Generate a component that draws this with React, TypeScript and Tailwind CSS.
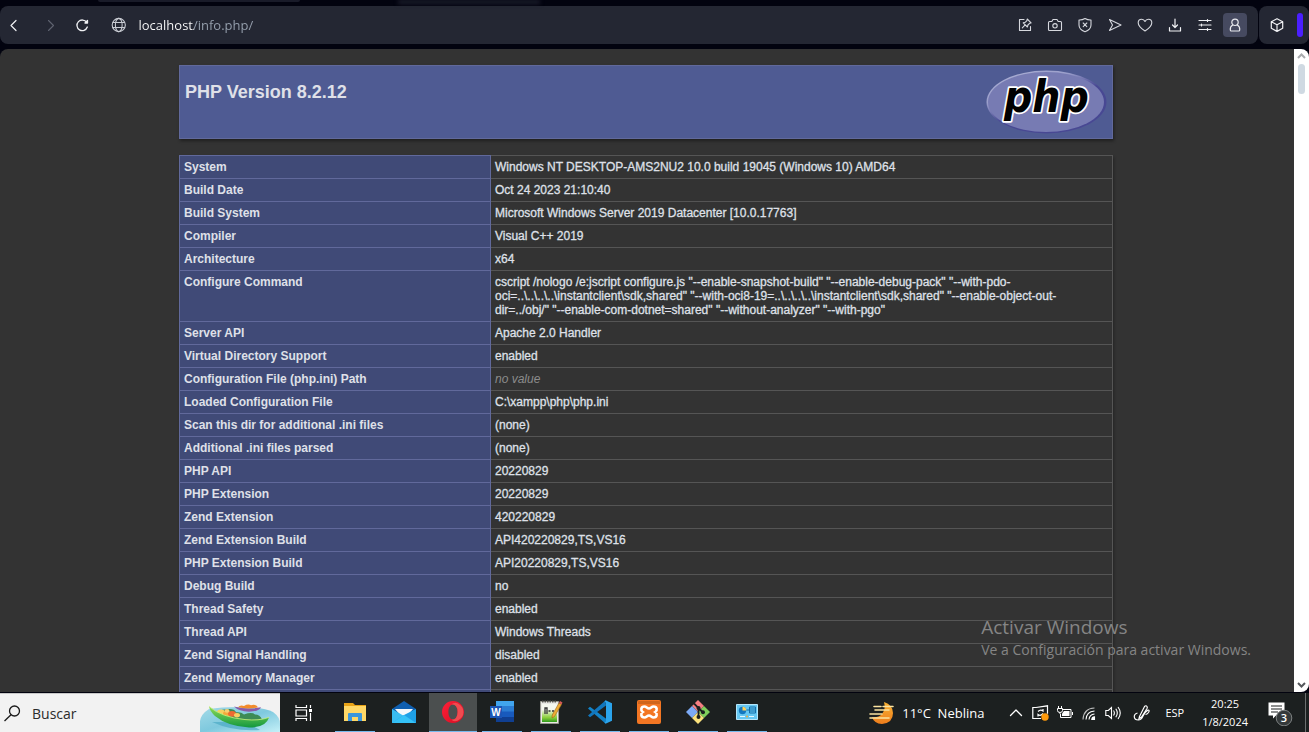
import type { ReactNode } from 'react';

const rows: [string, string | null][] = [
  ['System', 'Windows NT DESKTOP-AMS2NU2 10.0 build 19045 (Windows 10) AMD64'],
  ['Build Date', 'Oct 24 2023 21:10:40'],
  ['Build System', 'Microsoft Windows Server 2019 Datacenter [10.0.17763]'],
  ['Compiler', 'Visual C++ 2019'],
  ['Architecture', 'x64'],
  [
    'Configure Command',
    'cscript /nologo /e:jscript configure.js "--enable-snapshot-build" "--enable-debug-pack" "--with-pdo-oci=..\\..\\..\\..\\instantclient\\sdk,shared" "--with-oci8-19=..\\..\\..\\..\\instantclient\\sdk,shared" "--enable-object-out-dir=../obj/" "--enable-com-dotnet=shared" "--without-analyzer" "--with-pgo"',
  ],
  ['Server API', 'Apache 2.0 Handler'],
  ['Virtual Directory Support', 'enabled'],
  ['Configuration File (php.ini) Path', null],
  ['Loaded Configuration File', 'C:\\xampp\\php\\php.ini'],
  ['Scan this dir for additional .ini files', '(none)'],
  ['Additional .ini files parsed', '(none)'],
  ['PHP API', '20220829'],
  ['PHP Extension', '20220829'],
  ['Zend Extension', '420220829'],
  ['Zend Extension Build', 'API420220829,TS,VS16'],
  ['PHP Extension Build', 'API20220829,TS,VS16'],
  ['Debug Build', 'no'],
  ['Thread Safety', 'enabled'],
  ['Thread API', 'Windows Threads'],
  ['Zend Signal Handling', 'disabled'],
  ['Zend Memory Manager', 'enabled'],
  ['', ''],
];

function Line({ children, size = 16, color = '#d6d8de', width = 1.1 }: { children: ReactNode; size?: number; color?: string; width?: number }) {
  return (
    <svg width={size} height={size} viewBox="0 0 16 16" fill="none" stroke={color} strokeWidth={width} strokeLinecap="round" strokeLinejoin="round" aria-hidden="true">
      {children}
    </svg>
  );
}

function ToolButton({ label, children, active = false }: { label: string; children: ReactNode; active?: boolean }) {
  return (
    <button
      type="button"
      aria-label={label}
      className={active ? 'flex size-6 items-center justify-center rounded bg-[#464a60]' : 'flex size-6 items-center justify-center rounded'}
    >
      {children}
    </button>
  );
}

function PhpLogo() {
  return (
    <svg width="121" height="66" viewBox="0 0 121 66" role="img" aria-label="PHP logo">
      <defs>
        <linearGradient id="rim" x1="0.1" y1="0" x2="0.8" y2="1">
          <stop offset="0" stopColor="#aeb2d5" />
          <stop offset="0.3" stopColor="#9a9ecb" />
          <stop offset="0.55" stopColor="#484893" />
          <stop offset="1" stopColor="#484893" />
        </linearGradient>
      </defs>
      <ellipse cx="60.500" cy="32" rx="60" ry="31.500" fill="url(#rim)" />
      <ellipse cx="60" cy="32" rx="58" ry="30" fill="#777bb3" />
      <text
        x="18"
        y="42"
        fontFamily="DejaVu Sans Condensed, DejaVu Sans, sans-serif"
        fontWeight="700"
        fontStyle="italic"
        fontSize="44"
        fill="#000"
        stroke="#fff"
        strokeWidth="3.500"
        strokeLinejoin="round"
        paintOrder="stroke"
      >
        php
      </text>
    </svg>
  );
}

function BrowserBar() {
  return (
    <>
      <div className="flex h-[6px] shrink-0 items-start bg-[#02030f] pl-[98px]">
        <div className="h-[2px] w-[202px] rounded-b bg-[#191b29]" />
        <div className="ml-[98px] h-[4px] w-[142px] bg-[#1c1e2c] blur-[2px]" />
      </div>
      <header className="flex h-[39px] shrink-0 gap-px pb-px">
        <div className="flex min-w-0 flex-1 items-center rounded-lg bg-[#242733] pr-[11px]">
          <nav className="flex items-center gap-[10px] pl-[2px]" aria-label="Navegación">
            <ToolButton label="Atrás">
              <Line color="#f0f1f4" width={1.2}><path d="M10 3.500 5 8.500l5 5" /></Line>
            </ToolButton>
            <ToolButton label="Adelante">
              <Line color="#5f6370" width={1.1}><path d="m8.500 3.500 5 5-5 5" /></Line>
            </ToolButton>
            <ToolButton label="Recargar">
              <Line color="#f0f1f4" width={1.3}>
                <path d="M12.700 5.400A5.300 5.300 0 1 0 13.300 10" />
                <path d="M13.500 3.500v2.500H11z" fill="#f0f1f4" />
              </Line>
            </ToolButton>
          </nav>
          <div className="flex min-w-0 flex-1 items-center gap-3 pl-[17px]">
            <Line color="#c9ccd3" width={1.1}>
              <circle cx="8" cy="8" r="6.800" />
              <ellipse cx="8" cy="8" rx="3.500" ry="6.800" />
              <path d="M2 5.500h12M2 10.500h12" />
            </Line>
            <input
              type="text"
              aria-label="Dirección"
              defaultValue="localhost/info.php/"
              className="w-full min-w-0 bg-[linear-gradient(90deg,#ffffff_55px,#98a2b0_55px)] bg-clip-text font-['Open_Sans',sans-serif] text-[13px] leading-5 text-transparent outline-none"
            />
          </div>
          <div className="flex shrink-0 items-center gap-[6px]">
            <ToolButton label="Editar captura">
              <Line>
                <path d="M7 2.500H2.500v11h11V9.500" />
                <path d="m10.200 2 3.900 3.900-1.500.4-1.700 1.700-.5 2-4.200-4.200 2-.5L9.900 3.600zM8.200 7.900 5.300 10.800" />
              </Line>
            </ToolButton>
            <ToolButton label="Instantánea">
              <Line>
                <path d="M2.500 4.500h2.300l1.200-2h4l1.200 2h2.300q1 0 1 1v7q0 1-1 1h-11q-1 0-1-1v-7q0-1 1-1z" />
                <circle cx="8" cy="8.800" r="2.200" />
              </Line>
            </ToolButton>
            <ToolButton label="Bloqueador">
              <Line>
                <path d="M8 1.500q3 1.700 6 1.500v5q0 4.500-6 6.800Q2 12.500 2 8V3q3 .2 6-1.500z" />
                <path d="m6.200 6 3.600 3.600M9.800 6 6.200 9.600" />
              </Line>
            </ToolButton>
            <ToolButton label="Enviar">
              <Line><path d="M2.500 2.500 14 8 2.500 13.500 5.500 8z" /></Line>
            </ToolButton>
            <ToolButton label="Favoritos">
              <Line><path d="M8 14C4 11.500 1.200 8.800 1.200 5.800 1.200 3.600 2.800 2.200 4.600 2.200 6.200 2.200 7.400 3.100 8 4.400 8.600 3.100 9.800 2.200 11.400 2.200c1.800 0 3.400 1.400 3.400 3.600 0 3-2.800 5.700-6.800 8.200z" /></Line>
            </ToolButton>
            <ToolButton label="Descargas">
              <Line color="#f0f1f4" width={1.2}><path d="M8 2v8M5.500 8 8 10.500 10.500 8M2.500 10.500V14h11v-3.500" /></Line>
            </ToolButton>
            <ToolButton label="Configuración fácil">
              <Line color="#f0f1f4" width={1.2}><path d="M2 3.500h12M2 8h12M2 12.500h12M10.500 2.500v2M4.500 7v2M10.500 11.500v2" /></Line>
            </ToolButton>
            <ToolButton label="Perfil" active>
              <Line color="#e8e9ee" width={1.2}>
                <circle cx="8" cy="5.300" r="3.200" />
                <path d="M5.500 8.300Q3 9.500 3.300 13q0 1 1 1h7.400q1 0 1-1Q13 9.500 10.500 8.300" />
              </Line>
            </ToolButton>
          </div>
        </div>
        <div className="flex w-[50px] shrink-0 items-center justify-between rounded-lg bg-[#242733] px-[6px]">
          <ToolButton label="Extensiones">
            <Line color="#f0f1f4" width={1.2}><path d="M8 1.700 13.700 4.700v6.600L8 14.400 2.300 11.300V4.700zM2.300 4.700 8 7.700l5.700-3M8 7.700v6.700" /></Line>
          </ToolButton>
          <div className="h-6 w-[6px] rounded-full bg-[#4b1fff]" />
        </div>
      </header>
    </>
  );
}

function InfoPage() {
  return (
    <main className="min-w-0 flex-1 overflow-hidden rounded-tl-lg bg-[#333333] pt-4 pr-[2px] font-['Liberation_Sans',Arial,sans-serif] text-[#dfe0e8]">
      <div className="mx-auto flex w-[934px] max-w-full items-start justify-between border border-[#61699b] bg-[#4f5b93] px-[5px] pt-1 pb-[2px] shadow-[1px_2px_3px_rgba(0,0,0,0.4)]">
        <h1 className="pt-[11px] text-lg leading-[22px] font-bold">PHP Version 8.2.12</h1>
        <PhpLogo />
      </div>
      <table className="mx-auto mt-4 w-[934px] max-w-full table-fixed border-collapse text-xs leading-[14px] shadow-[1px_2px_3px_rgba(0,0,0,0.3)]">
        <colgroup>
          <col className="w-1/3" />
          <col />
        </colgroup>
        <tbody>
          {rows.map(([name, value], i) => (
            <tr key={i} className="h-[23px]">
              <th scope="row" className="border border-[#61699b] bg-[#404a77] px-1 py-1 text-left align-baseline font-bold">
                {name}
              </th>
              <td className="border border-[#555555] px-1 py-1 align-baseline [-webkit-text-stroke:0.3px]">
                {value === null ? <i className="text-[#8c8c8c] [-webkit-text-stroke:0px]">no value</i> : value}
              </td>
            </tr>
          ))}
        </tbody>
      </table>
    </main>
  );
}

function ScrollBar() {
  return (
    <div className="flex w-[15px] shrink-0 flex-col items-center justify-between rounded-r-lg bg-white" aria-hidden="true">
      <div className="flex flex-col items-center">
        <svg width="15" height="15" viewBox="0 0 15 15" fill="none" stroke="#a9abae" strokeWidth="2"><path d="m4 9 3.500-3.500L11 9" /></svg>
        <div className="h-[30px] w-[7px] rounded-full bg-[#cfd9e2]" />
      </div>
      <svg width="15" height="15" viewBox="0 0 15 15" fill="none" stroke="#55575b" strokeWidth="2"><path d="M4 6l3.500 3.500L11 6" /></svg>
    </div>
  );
}

function BoatArt() {
  return (
    <svg width="80" height="38" viewBox="0 0 80 38" aria-hidden="true">
      <defs>
        <linearGradient id="sea" x1="0" y1="0" x2="1" y2="1">
          <stop offset="0" stopColor="#a5dbe8" />
          <stop offset="0.5" stopColor="#7fc9de" />
          <stop offset="1" stopColor="#c4f0f8" />
        </linearGradient>
        <linearGradient id="hull" x1="0" y1="0" x2="0" y2="1">
          <stop offset="0" stopColor="#8edb58" />
          <stop offset="1" stopColor="#13983f" />
        </linearGradient>
      </defs>
      <path d="M0 38V27Q1 20 9 15 20 13 40 13q24 0 33 5 7 5 7 12v8z" fill="url(#sea)" />
      <path d="M12 28q22 10 48 8l-14-8z" fill="#4ba9c4" opacity="0.700" />
      <g transform="translate(0 9) scale(1 0.720)">
        <path d="M34 5q13 5 27 1-2 6-12 6-10 0-15-7z" fill="#8b5aa8" />
        <path d="M38 6q2-4 6-2 4-3 7-1 5-2 7 3-10 3-20 0z" fill="#f28b2c" />
        <path d="M17 16q3-8 9-7 8-2 10 4 5-1 8 3 8-4 11 0 5 0 7 7-24 5-45-7z" fill="#3d8b55" />
        <circle cx="21" cy="13" r="4" fill="#f8d060" />
        <circle cx="27" cy="15" r="4" fill="#f6a93a" />
        <circle cx="32" cy="15" r="4" fill="#ef6a32" />
        <circle cx="27" cy="11" r="2.500" fill="#f8cf73" />
        <circle cx="37" cy="17" r="3" fill="#f9cf62" />
        <path d="M9 5q13 15 36 18 14 2 24-3-3 14-20 14Q27 32 15 18 10 12 9 5z" fill="url(#hull)" />
        <path d="M9 5q13 15 36 18 14 2 24-3" fill="none" stroke="#c7ee7d" strokeWidth="1" />
      </g>
    </svg>
  );
}

function Explorer() {
  return (
    <svg width="24" height="24" viewBox="0 0 24 24" aria-hidden="true">
      <path d="M1 3h9l2 2h11v16H1z" fill="#e8a317" />
      <path d="M1 6h22v15H1z" fill="#ffd867" />
      <path d="M5 21v-7q0-1 1-1h12q1 0 1 1v7h-4v-4H9v4z" fill="#3a96dd" />
    </svg>
  );
}

function Mail() {
  return (
    <svg width="24" height="24" viewBox="0 0 24 24" aria-hidden="true">
      <path d="M0 9 12 1l12 8v6H0z" fill="#0f5fb0" />
      <path d="M3 9h18l-6 7H9z" fill="#f4f8fb" />
      <path d="M0 9v14h24z" fill="#39bdf2" />
      <path d="M24 9 12 15 0 23h24z" fill="#1ea0e6" />
      <path d="M0 23 12 15l12 8z" fill="#34c2f7" />
    </svg>
  );
}

function Opera() {
  return (
    <svg width="24" height="24" viewBox="0 0 24 24" aria-hidden="true">
      <defs>
        <linearGradient id="opera" x1="0" y1="0" x2="1" y2="1">
          <stop offset="0" stopColor="#ff2038" />
          <stop offset="1" stopColor="#d60c22" />
        </linearGradient>
      </defs>
      <path fillRule="evenodd" d="M12 1a11 11 0 1 0 0 22 11 11 0 0 0 0-22zm0 3.500c2.800 0 4.600 3.400 4.600 7.500s-1.800 7.500-4.600 7.500-4.600-3.400-4.600-7.500 1.800-7.500 4.600-7.500z" fill="url(#opera)" />
      <path d="M10.500 4.300Q13.500 1.500 17 3.500q5.500 3 5.500 8.500t-5.500 8.500q-3.500 2-6.500-.8 6.100 0 6.100-7.700T10.500 4.300z" fill="#ef4b50" />
    </svg>
  );
}

function Word() {
  return (
    <svg width="24" height="24" viewBox="0 0 24 24" aria-hidden="true">
      <path d="M6 1h18v6H6z" fill="#41a5ee" />
      <path d="M6 6h18v6H6z" fill="#2b7cd3" />
      <path d="M6 11.500h18v6H6z" fill="#185abd" />
      <path d="M6 17h18v5H6z" fill="#103f91" />
      <path d="M0 6h12v12H0z" fill="#1b55b5" />
      <text x="6" y="15.500" textAnchor="middle" fontFamily="Liberation Sans, sans-serif" fontSize="10" fontWeight="700" fill="#fff">W</text>
    </svg>
  );
}

function NotepadPlus() {
  return (
    <svg width="24" height="24" viewBox="0 0 24 24" aria-hidden="true">
      <defs>
        <linearGradient id="page" x1="0" y1="0" x2="0" y2="1">
          <stop offset="0.300" stopColor="#f4f7ee" />
          <stop offset="0.750" stopColor="#8ccf3c" />
          <stop offset="1" stopColor="#2f9a1d" />
        </linearGradient>
      </defs>
      <path d="M1.500 1.500h18v22h-18z" fill="#e9e9e4" stroke="#98988f" />
      <path d="M3 4h15v18H3z" fill="url(#page)" />
      <path d="M3 1.500h15" stroke="#55554f" strokeWidth="2" strokeDasharray="1.500 1" />
      <path d="M6 14V8h2v6M9.500 11h2M13 11h2" stroke="#333" strokeWidth="1.300" fill="none" />
      <path d="m20 3 2.500 1.500-7 12-2.500 1.500.2-3z" fill="#edac35" stroke="#9a6518" strokeWidth="0.600" />
      <path d="m21 1 2.500 1.500-1 2L20 3z" fill="#d65b58" />
    </svg>
  );
}

function Code() {
  return (
    <svg width="24" height="24" viewBox="0 0 24 24" aria-hidden="true">
      <path d="M0 8.500 2 6.700 18.500 19 17.500 23.500z" fill="#1383c8" />
      <path d="M0 15.500 2 17.300 18 5.500 17.500.5z" fill="#1176bd" />
      <path d="m17.500.3 6.500 3v17.400l-6.500 3-1-1.400 1.500-1V2.700l-1.500-1z" fill="#2ba4ec" />
    </svg>
  );
}

function Xampp() {
  return (
    <svg width="24" height="24" viewBox="0 0 24 24" aria-hidden="true">
      <rect width="24" height="24" rx="2" fill="#f37623" />
      <path d="M1 2q0-1 1-1h20q1 0 1 1v2H1z" fill="#d0651c" />
      <path d="M7.500 6.500c2 0 2.500 2 4.500 2s2.500-2 4.500-2c3.800 0 4 4 1.800 5.500 2.200 1.500 2 5.500-1.800 5.500-2 0-2.500-2-4.500-2s-2.500 2-4.500 2c-3.800 0-4-4-1.800-5.500C3.500 10.500 3.700 6.500 7.500 6.500z" fill="none" stroke="#fff" strokeWidth="2.600" />
    </svg>
  );
}

function Git() {
  return (
    <svg width="24" height="24" viewBox="0 0 24 24" aria-hidden="true">
      <path d="m12 0 6 6-6 6-6-6z" fill="#f57e82" />
      <path d="m6 6 6 6-6 6-6-6z" fill="#7caaf5" />
      <path d="m18 6 6 6-6 6-6-6z" fill="#7fce5b" />
      <path d="m12 12 6 6-6 6-6-6z" fill="#fbe27c" />
      <path d="M8 3.500 12.500 8v9M12.500 8l4 4" stroke="#1c2020" strokeWidth="1.800" fill="none" />
      <circle cx="12.500" cy="8" r="2" fill="#1c2020" />
      <circle cx="12.500" cy="17" r="2" fill="#1c2020" />
      <circle cx="17" cy="12.300" r="2" fill="#1c2020" />
    </svg>
  );
}

function ControlPanel() {
  return (
    <svg width="22" height="24" viewBox="0 0 22 24" aria-hidden="true">
      <path d="M.5 4.500h21v15H.5z" fill="#66c8f3" stroke="#b4e6fb" />
      <circle cx="6.500" cy="10.500" r="3.700" fill="#1377bf" />
      <path d="M6.500 10.500V6.800a3.700 3.700 0 0 1 3.700 3.700z" fill="#ffd257" />
      <path d="M13.500 7h6v6h-6zM13.500 9h6M13.500 11h6M10.500 10h3" stroke="#146fa8" fill="none" />
      <path d="M4 16.500h5M13 16.500h5" stroke="#e6f8ff" />
      <circle cx="11" cy="16.500" r="1" fill="#f2ae3b" />
    </svg>
  );
}

const apps: { name: string; icon: ReactNode; state: 'idle' | 'open' | 'active' }[] = [
  { name: 'Explorador de archivos', icon: <Explorer />, state: 'open' },
  { name: 'Correo', icon: <Mail />, state: 'idle' },
  { name: 'Opera', icon: <Opera />, state: 'active' },
  { name: 'Word', icon: <Word />, state: 'open' },
  { name: 'Notepad++', icon: <NotepadPlus />, state: 'open' },
  { name: 'Visual Studio Code', icon: <Code />, state: 'open' },
  { name: 'XAMPP', icon: <Xampp />, state: 'open' },
  { name: 'Git', icon: <Git />, state: 'open' },
  { name: 'Panel de control', icon: <ControlPanel />, state: 'open' },
];

const underline = { idle: 'h-px w-10', open: 'h-px w-10 bg-[#76b9ed]', active: 'h-px w-full bg-[#76b9ed]' };

function TaskBar() {
  return (
    <footer className="flex h-[39px] shrink-0 items-stretch bg-[#1c2020] font-['Open_Sans',sans-serif] text-white">
      <div className="flex w-[280px] shrink-0 items-center border-t border-[#c8c8c8] bg-[#f2f2f2] pl-[4px]">
        <svg width="17" height="17" viewBox="0 0 17 17" fill="none" stroke="#1a1a1a" strokeWidth="1.300" aria-hidden="true">
          <circle cx="10.500" cy="6" r="5" />
          <path d="M7 9.700.5 16" />
        </svg>
        <input
          type="text"
          aria-label="Buscar"
          placeholder="Buscar"
          className="ml-[11px] min-w-0 flex-1 pt-[2px] text-sm leading-5 outline-none placeholder:text-[#2b2b2b]"
        />
        <BoatArt />
      </div>
      <button type="button" aria-label="Vista de tareas" className="flex w-12 items-center justify-center">
        <svg width="18" height="16" viewBox="0 0 18 16" fill="none" stroke="#fff" strokeWidth="1.200" aria-hidden="true">
          <path d="M1 0v2.500h10.500V0M1 16v-2.500h10.500V16M1 5h10.500v6H1zM15.500 0v3M15.500 8v8" />
          <path d="M14 4h3v3h-3z" fill="#fff" stroke="none" />
        </svg>
      </button>
      <div className="ml-[3px] flex gap-px">
        {apps.map((app) => (
          <button
            key={app.name}
            type="button"
            aria-label={app.name}
            className={app.state === 'active' ? 'flex w-12 flex-col items-center bg-[#4b4f4f]' : 'flex w-12 flex-col items-center'}
          >
            <span className="flex flex-1 items-center">{app.icon}</span>
            <span className={underline[app.state]} />
          </button>
        ))}
      </div>
      <div className="ml-auto flex items-center">
        <button type="button" className="flex items-center gap-2 text-[13px] leading-5 whitespace-pre">
          <svg width="25" height="24" viewBox="0 0 25 24" aria-hidden="true">
            <defs>
              <linearGradient id="moon" x1="0" y1="0" x2="0" y2="1">
                <stop offset="0" stopColor="#f9b233" />
                <stop offset="1" stopColor="#ee7d1c" />
              </linearGradient>
            </defs>
            <path d="M15 1q9 3 9 11 0 10-11 11Q5 22.500 3 16q6 1 10-3 4-5 2-12z" fill="url(#moon)" />
            <path d="M5 5.500h7M14 5.500h10M6 9h14M1 13h12M1 17h19" stroke="#fbe3a0" strokeWidth="1.600" strokeLinecap="round" />
          </svg>
          <span>11°C  Neblina</span>
        </button>
        <div className="ml-6 flex items-center gap-2">
          <button type="button" aria-label="Mostrar iconos ocultos">
            <Line color="#fff" width={1.3}><path d="m2.500 10.500 5.500-5.500 5.500 5.500" /></Line>
          </button>
          <button type="button" aria-label="Actualización">
            <svg width="17" height="16" viewBox="0 0 17 16" fill="none" stroke="#fff" strokeWidth="1.200" aria-hidden="true">
              <path d="M4 2.500H.8v11H9M4 2.500 15.500.8v8" />
              <path d="M6 6.500q2.500-2.500 5-.5V4M11 8.500q-2.500 3-5 1v2" />
              <circle cx="13" cy="12" r="3.700" fill="#ff9a0c" stroke="none" />
            </svg>
          </button>
          <button type="button" aria-label="Batería">
            <svg width="16" height="16" viewBox="0 0 16 16" fill="none" stroke="#fff" aria-hidden="true">
              <path d="M6 4.500h8v8H3.500V9M15.500 7v3M1.500 1v2M4.500 1v2M.5 3.500h5v2q0 2-2.500 2T.5 5.500zM3 7.500V9" />
              <path d="M7 6h5.500v5H5V8.500z" fill="#fff" stroke="none" />
            </svg>
          </button>
          <button type="button" aria-label="Red">
            <svg width="16" height="16" viewBox="0 0 16 16" fill="none" stroke="#fff" strokeWidth="1.100" aria-hidden="true">
              <path d="M2 14.500Q2.500 3.500 13.500 3" opacity="0.700" />
              <path d="M5 14.500Q5.500 6.500 13.500 6M8 14.500Q8.500 9.500 13.500 9" />
              <path d="M10.800 14.500q.2-2.700 2.700-2.700v2.700z" fill="#fff" />
            </svg>
          </button>
          <button type="button" aria-label="Volumen">
            <svg width="17" height="16" viewBox="0 0 17 16" fill="none" stroke="#fff" strokeWidth="1.100" aria-hidden="true">
              <path d="M.8 5.500h2.500L6.500 2.500v11l-3.200-3H.8zM8.500 5.500q1.800 2.500 0 5M10.800 3.800q3 4.200 0 8.400M13 2q4.500 6 0 12" />
            </svg>
          </button>
        </div>
        <button type="button" aria-label="Windows Ink" className="ml-[11px]">
          <svg width="18" height="18" viewBox="0 0 18 18" fill="none" stroke="#fff" strokeWidth="1.200" aria-hidden="true">
            <path d="M6.500 12.500 11.500 2.500q1.500-1.500 2.500 0 .6 1 0 2L8.500 13l-2.500 1.500zM4.500 9Q1 10 1.300 13t4 3q3 0 4.700-4 2-4 5-6 2 0 .5 2.500-1.500 2-3 2" />
          </svg>
        </button>
        <button type="button" className="ml-[14px] text-[11px] leading-4">ESP</button>
        <button type="button" className="ml-[18px] flex flex-col items-center text-[11px] leading-[18px]">
          <span>20:25</span>
          <span>1/8/2024</span>
        </button>
        <button type="button" aria-label="3 notificaciones nuevas" className="ml-5">
          <svg width="25" height="26" viewBox="0 0 25 26" aria-hidden="true">
            <path d="M.5 2.500h16v13H8l-3 3v-3H.5z" fill="#fff" />
            <path d="M3 6h11M3 9h11M3 12h7" stroke="#1c2020" strokeWidth="1.200" />
            <circle cx="16" cy="18" r="7.800" fill="#34393a" stroke="#7c8080" strokeWidth="1" />
            <text x="16" y="22" textAnchor="middle" fontFamily="Open Sans, sans-serif" fontSize="11" fontWeight="600" fill="#fff">3</text>
          </svg>
        </button>
        <div className="mr-[3px] ml-3 h-[39px] w-px bg-[#6c6f6f]" />
      </div>
    </footer>
  );
}

export default function App() {
  return (
    <div className="flex h-screen flex-col overflow-hidden bg-[#02030f]">
      <BrowserBar />
      <div className="relative mt-1 mb-px flex min-h-0 flex-1">
        <InfoPage />
        <ScrollBar />
        <aside className="pointer-events-none absolute right-[58px] bottom-8 font-['Open_Sans',sans-serif] text-[#858585]">
          <p className="text-[19px] leading-[26px]">Activar Windows</p>
          <p className="text-sm leading-5">Ve a Configuración para activar Windows.</p>
        </aside>
      </div>
      <TaskBar />
    </div>
  );
}
